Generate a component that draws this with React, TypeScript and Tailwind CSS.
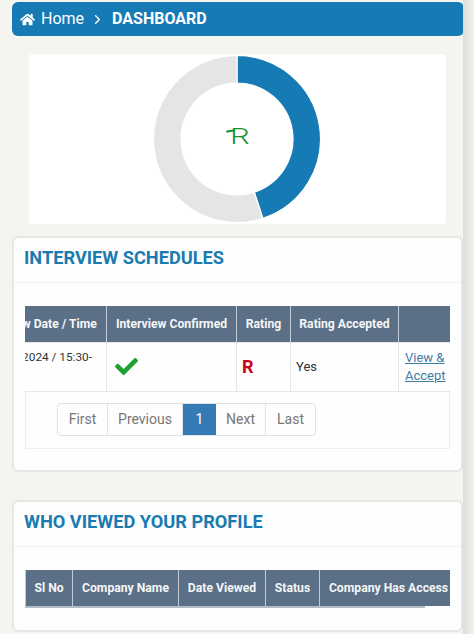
import { FaHome, FaCheck } from "react-icons/fa";
import { FiChevronRight } from "react-icons/fi";

const font = { fontFamily: "Roboto, 'Liberation Sans', sans-serif" };

function arc(a0: number, a1: number, R: number, r: number) {
  const p = (ang: number, rad: number) => {
    const t = (ang * Math.PI) / 180;
    return `${(100 + rad * Math.sin(t)).toFixed(2)} ${(100 - rad * Math.cos(t)).toFixed(2)}`;
  };
  const large = a1 - a0 > 180 ? 1 : 0;
  return `M${p(a0, R)}A${R} ${R} 0 ${large} 1 ${p(a1, R)}L${p(a1, r)}A${r} ${r} 0 ${large} 0 ${p(a0, r)}Z`;
}

function Donut() {
  return (
    <div className="relative mr-px h-[170px] w-[170px]">
      <svg viewBox="15 15 170 170" className="h-full w-full">
        <path d={arc(0, 162, 83.5, 56)} fill="#167ab5" stroke="#fff" strokeWidth="1.2" />
        <path d={arc(162, 360, 83.5, 56)} fill="#e5e5e5" stroke="#fff" strokeWidth="1.2" />
      </svg>
      <span className="absolute inset-0 flex translate-x-[3px] translate-y-[-2px] scale-x-[1.4] items-center justify-center text-[22px] leading-none font-light text-[#14912a]">
        R
      </span>
      <span className="absolute top-[76px] left-[74px] h-[1.5px] w-[9px] rotate-[-8deg] rounded-full bg-[#14912a]" />
    </div>
  );
}

const th = "border-x border-[#c3ccd6] bg-[#5b6f86] px-0 text-center text-[12.2px] font-bold whitespace-nowrap text-[#f4f6f8]";
const td = "border border-[#e6e6e6] text-[13px] text-[#333]";

function Card({ title, children, className }: { title: string; children: React.ReactNode; className: string }) {
  return (
    <section className={`rounded-md border-2 border-[#e6e6e2] bg-[#fefefe] ${className}`}>
      <h2 className="flex h-[45px] items-center border-b border-[#f0f0ee] pb-[5px] pl-[10px] text-[18.2px] font-bold text-[#197bb0]">
        {title}
      </h2>
      {children}
    </section>
  );
}

export default function App() {
  const pages = [
    { label: "First", w: "w-[50px]" },
    { label: "Previous", w: "w-[75px]" },
    { label: "1", w: "w-[33px]" },
    { label: "Next", w: "w-[50px]" },
    { label: "Last", w: "w-[49px]" },
  ];
  return (
    <div className="flex h-[634px] w-[474px] overflow-hidden bg-[#f4f4f0]" style={font}>
      <main className="w-[463px] shrink-0 pl-3">
        <header className="mt-[2px] flex h-[34px] w-[452px] items-center rounded-md bg-[#167ab5] pl-[8px] text-white">
          <FaHome className="text-[15px]" />
          <span className="ml-[6px] text-[16px]">Home</span>
          <FiChevronRight className="ml-[6px] text-[15px]" strokeWidth={2.2} />
          <span className="ml-[7px] text-[16px] font-bold">DASHBOARD</span>
        </header>

        <div className="mt-[18px] ml-[17px] flex h-[170px] w-[417px] justify-center rounded bg-white">
          <Donut />
        </div>

        <Card title="INTERVIEW SCHEDULES" className="mt-3 h-[236px] w-[451px]">
          <div className="mx-[11px] mt-[23px] overflow-hidden">
            <table className="ml-[-59px] table-fixed border-collapse" style={{ width: 484 }}>
              <colgroup>
                <col className="w-[140px]" />
                <col className="w-[130px]" />
                <col className="w-[54px]" />
                <col className="w-[108px]" />
                <col className="w-[52px]" />
              </colgroup>
              <thead>
                <tr className="h-[36px]">
                  <th className={th}>
                    <div className="pl-[13px] text-left">Interview Date / Time</div>
                  </th>
                  <th className={th}>Interview Confirmed</th>
                  <th className={th}>Rating</th>
                  <th className={th}>Rating Accepted</th>
                  <th className={th}></th>
                </tr>
              </thead>
              <tbody>
                <tr className="h-[49px]">
                  <td className={`${td} align-top`}>
                    <div className="mt-[6px] pr-[14px] text-right text-[11.8px] whitespace-nowrap">10-01-2024 / 15:30-</div>
                  </td>
                  <td className={td}>
                    <FaCheck className="ml-[8px] text-[23px] text-[#1fa033]" />
                  </td>
                  <td className={td}>
                    <span className="ml-[5px] text-[18px] font-bold text-[#d0021b]">R</span>
                  </td>
                  <td className={td}>
                    <span className="ml-[5px]">Yes</span>
                  </td>
                  <td className={td}>
                    <a className="ml-[6px] block text-[13px] leading-[18px] text-[#3f7ba3] underline">
                      View &amp;
                      <br />
                      Accept
                    </a>
                  </td>
                </tr>
              </tbody>
            </table>
            <div className="flex h-[57px] items-start border border-t-0 border-[#eeeeec] pt-[11px] pl-[31px]">
              <div className="flex h-[33px] items-stretch rounded border border-[#e2e2e2] text-[14px] text-[#777]">
                {pages.map((p) => (
                  <span
                    key={p.label}
                    className={
                      p.label === "1"
                        ? `flex ${p.w} items-center justify-center bg-[#337ab7] text-white`
                        : `flex ${p.w} items-center justify-center border-r border-[#e2e2e2] last:border-r-0`
                    }
                  >
                    {p.label}
                  </span>
                ))}
              </div>
            </div>
          </div>
        </Card>

        <Card title="WHO VIEWED YOUR PROFILE" className="mt-7 h-[132px] w-[451px]">
          <div className="mx-[11px] mt-[23px] overflow-hidden">
            <table className="table-fixed border-collapse" style={{ width: 425 }}>
              <colgroup>
                <col className="w-[47px]" />
                <col className="w-[106px]" />
                <col className="w-[87px]" />
                <col className="w-[54px]" />
                <col className="w-[131px]" />
              </colgroup>
              <thead>
                <tr className="h-[36px]">
                  <th className={th}>Sl No</th>
                  <th className={th}>Company Name</th>
                  <th className={th}>Date Viewed</th>
                  <th className={th}>Status</th>
                  <th className={th}>
                    <div className="pl-[7px]">Company Has Access</div>
                  </th>
                </tr>
              </thead>
            </table>
            <div className="h-[2px] w-[400px] bg-[#b4bcc6]" />
          </div>
        </Card>
      </main>
      <div className="flex-1 bg-gradient-to-r from-[#dcdcd8] to-[#f2f2ee]" />
    </div>
  );
}
